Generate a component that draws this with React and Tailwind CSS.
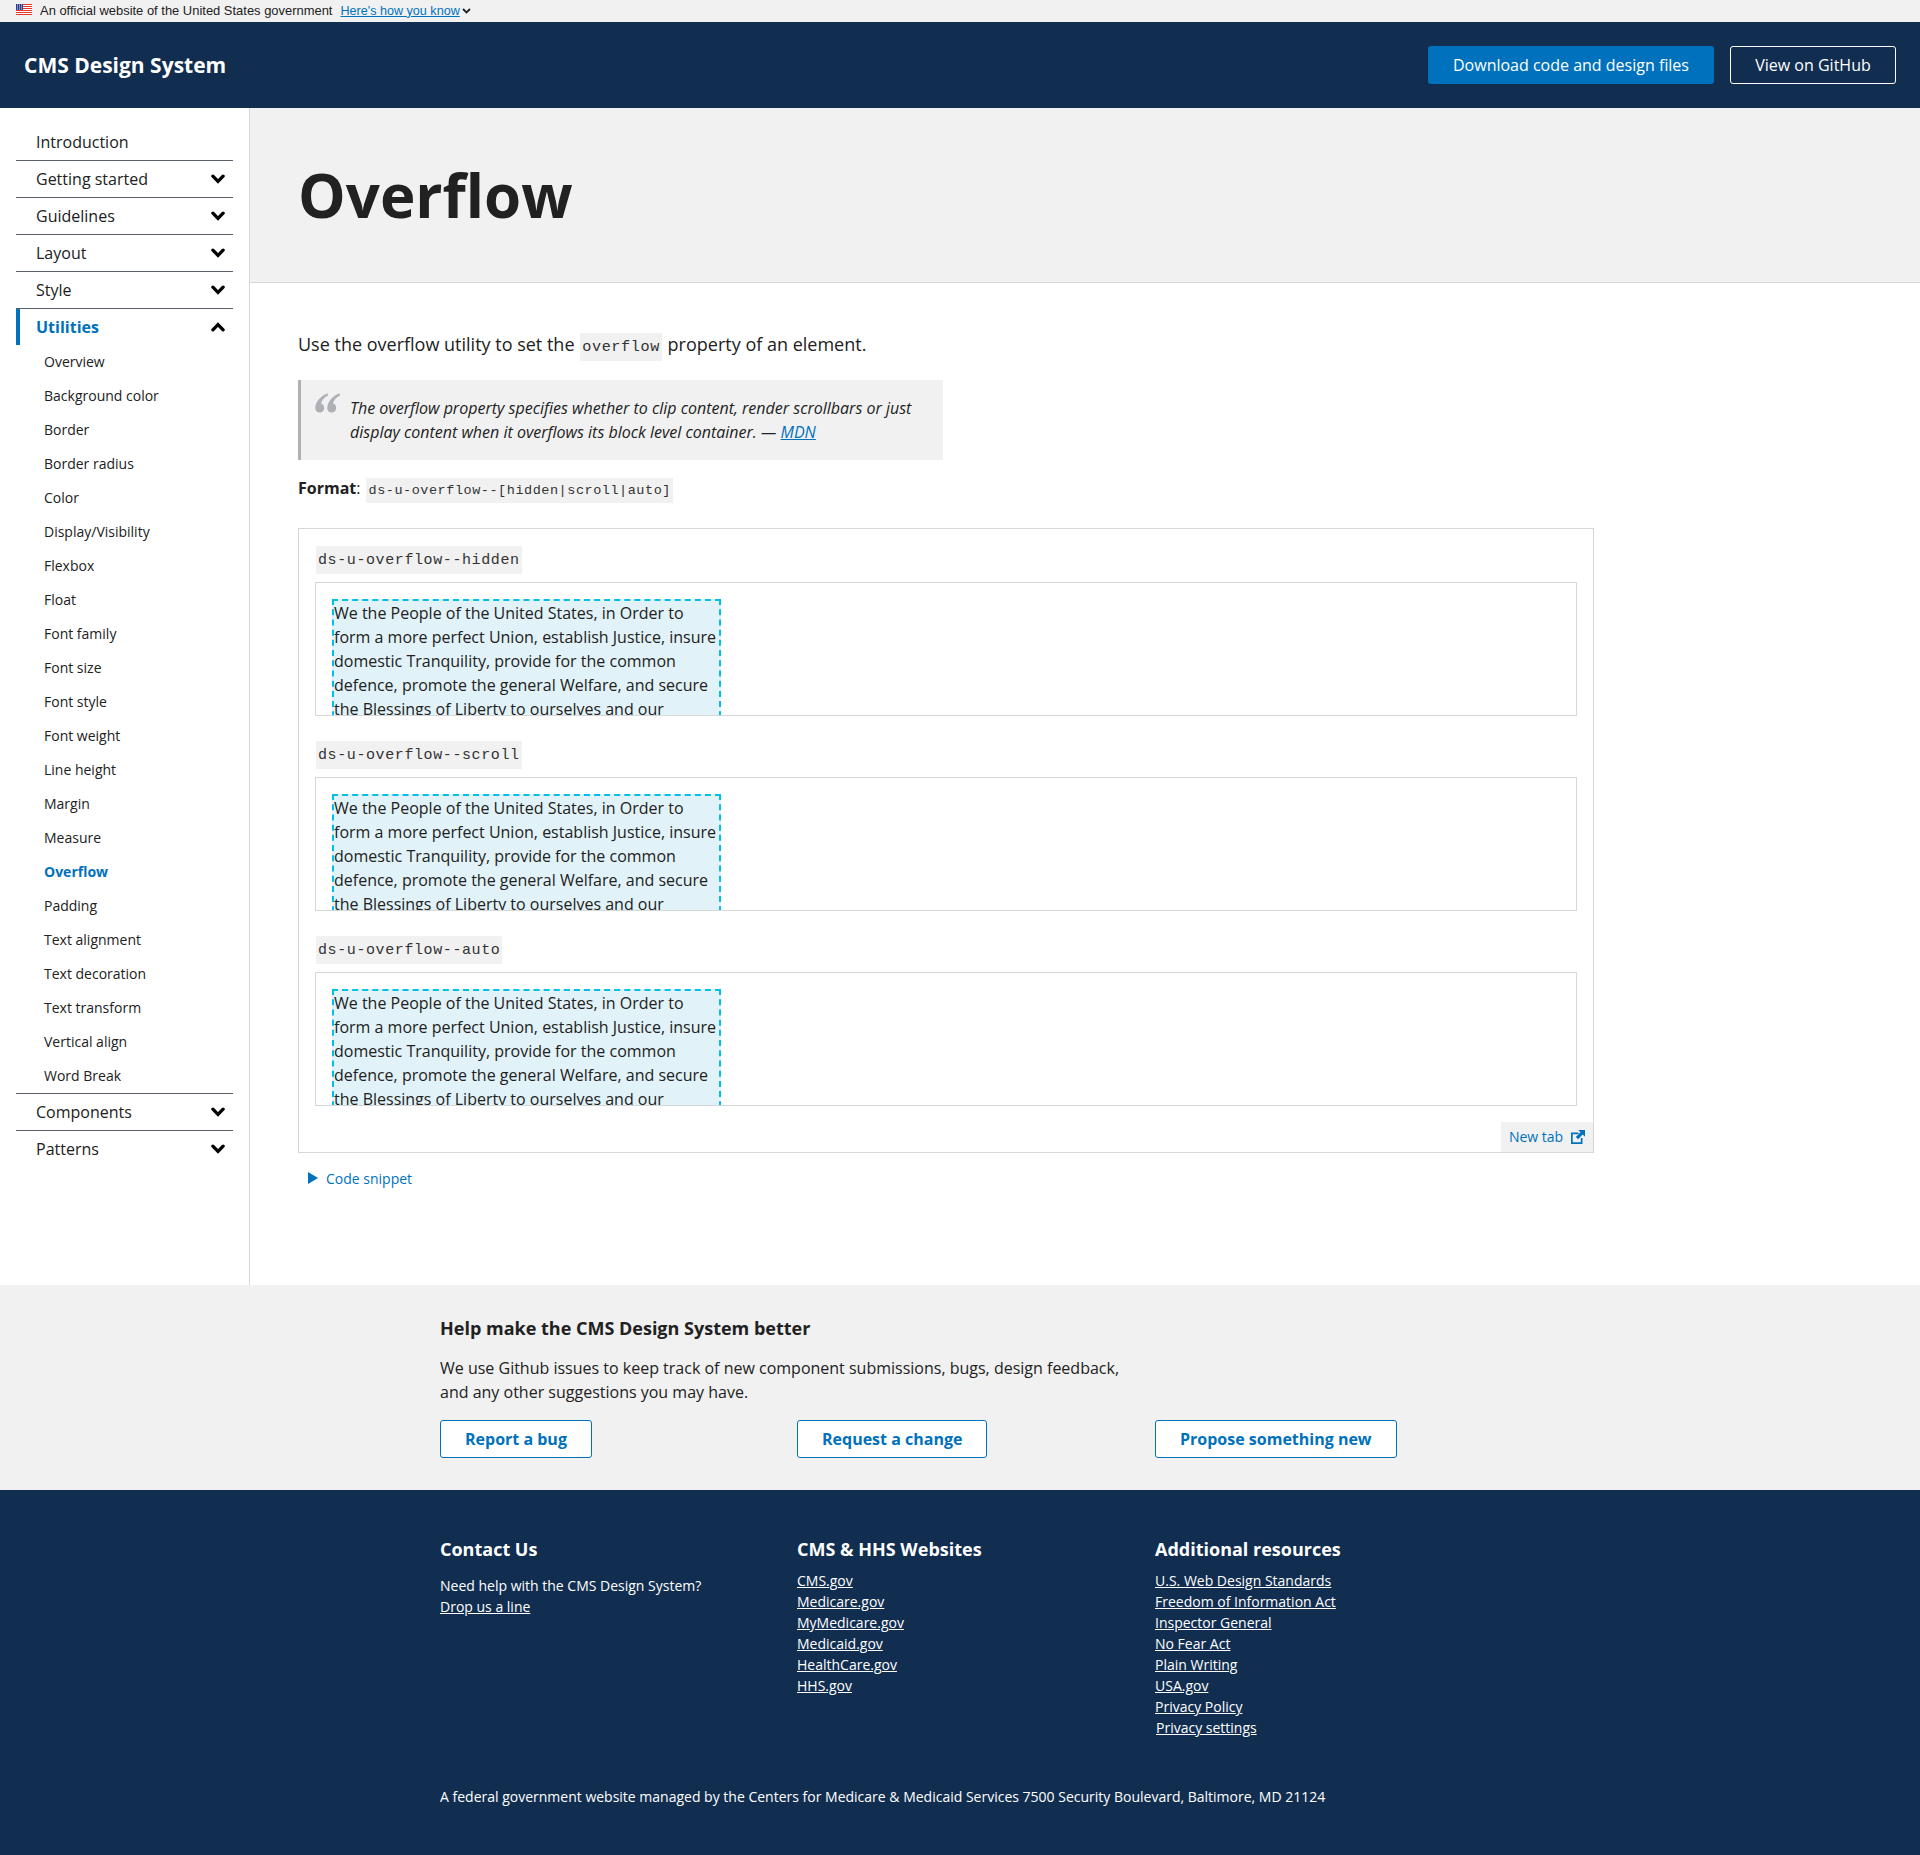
const OPEN = "font-['Open_Sans',sans-serif]";
const Chevron = ({ up }) => (
  <svg width="14" height="10" viewBox="0 0 14 10" className={up ? "rotate-180" : ""}>
    <path d="M1.9 2.2 L7 7.3 L12.1 2.2" fill="none" stroke="#000" strokeWidth="3.3" strokeLinecap="round" strokeLinejoin="miter" />
  </svg>
);
const Flag = () => (
  <svg width="16" height="11" viewBox="0 0 16 11" className="-mt-[3px]">
    <rect width="16" height="11" fill="#fff" />
    {[0, 2, 4, 6, 8, 10].map((y) => <rect key={y} y={y} width="16" height="1" fill="#e8362f" />)}
    <rect width="7" height="6" fill="#2e3a8c" />
    {[1, 3, 5].map((x) => [1, 3, 5].map((y) => <rect key={x + "-" + y} x={x} y={y - 0.5} width="1" height="1" fill="#dfe3f5" />))}
  </svg>
);
const ExternalIcon = () => (
  <svg width="14" height="14" viewBox="0 0 14 14" fill="#0071bc">
    <path d="M0 2.5h7.5v1.7H1.7v8.1h8.1V8h1.7v6H0z" />
    <path d="M7.2 0H14v6.8l-2.3-2.3-4.6 4.7-2.3-2.3 4.7-4.6z" />
  </svg>
);
const QuoteIcon = () => (
  <svg width="25" height="20" viewBox="0 0 25 20" fill="#aeb0b5">
    <path d="M12.5 0.3 C7 2.5 1.5 7 0.4 13.5 C-0.2 17.5 1.8 19.6 4.6 19.6 C7.4 19.6 9.2 17.5 9.2 15 C9.2 12.6 7.8 11 6 10.6 C6.8 7 9.5 4 13 2.5 Z" />
    <path d="M24.5 0.3 C19 2.5 13.5 7 12.4 13.5 C11.8 17.5 13.8 19.6 16.6 19.6 C19.4 19.6 21.2 17.5 21.2 15 C21.2 12.6 19.8 11 18 10.6 C18.8 7 21.5 4 25 2.5 Z" />
  </svg>
);

const top1 = ["Getting started", "Guidelines", "Layout", "Style"];
const subs = ["Overview", "Background color", "Border", "Border radius", "Color", "Display/Visibility", "Flexbox", "Float", "Font family", "Font size", "Font style", "Font weight", "Line height", "Margin", "Measure", "Overflow", "Padding", "Text alignment", "Text decoration", "Text transform", "Vertical align", "Word Break"];

const NavRow = ({ label, children, first }) => (
  <div className={"h-[37px] flex items-center justify-between pl-5 pr-[8px] text-[16px] text-[#212121] " + (first ? "" : "border-t border-[#5b616b]") }>
    <span>{label}</span>
    {children}
  </div>
);

const Demo = ({ name }) => (
  <div className="flex flex-col items-start">
    <code className="bg-[#f1f1f1] h-[28px] ml-[1px] px-[2px] pt-[2px] flex items-center font-['Liberation_Mono',monospace] text-[15px] tracking-[0.6px] text-[#333333]">{name}</code>
    <div className="mt-[8px] w-full h-[134px] border border-[#d6d7d9] px-4 pt-4 overflow-hidden">
      <div className="w-[389px] h-[200px] border-2 border-dashed border-[#02bfe7] bg-[#e1f3f8] text-[16px] leading-6 text-[#212121]">
        We the People of the United States, in Order to form a more perfect Union, establish Justice, insure domestic Tranquility, provide for the common defence, promote the general Welfare, and secure the Blessings of Liberty to ourselves and our Posterity, do ordain and establish this Constitution.
      </div>
    </div>
  </div>
);

const FootLink = ({ children }) => <a className="block underline text-white">{children}</a>;

export default function App() {
  return (
    <div className={OPEN + " w-[1920px] h-[1855px] bg-white text-[#212121] overflow-hidden"}>
      <div className="h-[22px] bg-[#f1f1f1] flex items-center pl-4 font-['Liberation_Sans',sans-serif] text-[12.95px] text-[#212121]">
        <Flag />
        <span className="ml-[8px]">An official website of the United States government</span>
        <a className="ml-[8px] text-[12.6px] text-[#0071bc] underline">Here's how you know</a>
        <svg width="9" height="6" viewBox="0 0 9 6" className="ml-[2px]"><path d="M1 1 L4.5 4.5 L8 1" fill="none" stroke="#212121" strokeWidth="1.8" /></svg>
      </div>
      <header className="h-[86px] bg-[#112e51] flex items-center justify-between pl-6 pr-6">
        <div className="text-white font-bold text-[21px] mt-[1px]">CMS Design System</div>
        <div className="flex gap-4">
          <div className="h-[38px] w-[286px] flex items-center justify-center bg-[#0071bc] rounded-[3px] text-white text-[16px]">Download code and design files</div>
          <div className="h-[38px] w-[166px] flex items-center justify-center border border-white rounded-[3px] text-white text-[16px]">View on GitHub</div>
        </div>
      </header>

      <div className="flex h-[1177px]">
        <aside className="w-[250px] shrink-0 border-r border-[#d6d7d9] pt-[15px] pl-4 pr-4">
          <NavRow label="Introduction" first />
          {top1.map((t) => <NavRow key={t} label={t}><Chevron /></NavRow>)}
          <div className="relative h-[37px] flex items-center justify-between pl-5 pr-[8px] text-[16px] font-bold text-[#0071bc] border-t border-[#5b616b]">
            <span className="absolute left-0 top-0 bottom-0 w-1 bg-[#0071bc]" />
            <span>Utilities</span>
            <Chevron up />
          </div>
          <ul className="text-[14px] pl-7 -mt-[1px]">
            {subs.map((s) => (
              <li key={s} className={"h-[34px] flex items-center " + (s === "Overflow" ? "font-bold text-[#0071bc]" : "")}>{s}</li>
            ))}
          </ul>
          <div className="mt-[1px]">
            <NavRow label="Components"><Chevron /></NavRow>
            <NavRow label="Patterns"><Chevron /></NavRow>
          </div>
        </aside>
        <main className="flex-1 min-w-0">
          <div className="h-[175px] bg-[#f1f1f1] border-b border-[#d6d7d9] pl-[48px] flex items-center">
            <h1 className="text-[60px] font-bold text-[#212121] leading-none">Overflow</h1>
          </div>
          <div className="pl-[48px] pt-[46px]">
            <p className="text-[18px] leading-[30px] h-[30px]">
              Use the overflow utility to set the <code className="bg-[#f1f1f1] px-[2px] py-[5px] font-['Liberation_Mono',monospace] text-[15.2px] tracking-[0.6px] text-[#333333] mx-[1px]">overflow</code> property of an element.
            </p>
            <div className="mt-[21px] w-[645px] h-[80px] bg-[#f1f1f1] border-l-[3px] border-[#aeb0b5] flex pl-[14px] pt-[16px]">
              <div className="w-[25px] h-5 shrink-0 -mt-[3px]"><QuoteIcon /></div>
              <p className="ml-[10px] italic text-[16px] leading-6 w-[590px]">
                The overflow property specifies whether to clip content, render scrollbars or just display content when it overflows its block level container. — <a className="text-[#0071bc] underline">MDN</a>
              </p>
            </div>
            <div className="mt-[16px] flex items-center h-[25px] text-[16px]">
              <div className="-mt-[2px]"><strong>Format</strong><span>:</span></div>
              <code className="ml-[6px] bg-[#f1f1f1] h-[25px] px-[2px] pt-[1px] flex items-center font-['Liberation_Mono',monospace] text-[13.5px] tracking-[0.54px] text-[#333333] mt-[4px]">ds-u-overflow--[hidden|scroll|auto]</code>
            </div>
            <div className="mt-[27px] w-[1296px] h-[625px] border border-[#d6d7d9] relative pl-4 pr-4 pt-[17px] flex flex-col gap-[25px]">
              <Demo name="ds-u-overflow--hidden" />
              <Demo name="ds-u-overflow--scroll" />
              <Demo name="ds-u-overflow--auto" />
              <div className="absolute right-0 bottom-0 w-[92px] h-[30px] bg-[#f1f1f1] flex items-center justify-center gap-2 text-[14px] text-[#0071bc]">
                <span className="-mt-[1px]">New tab</span>
                <ExternalIcon />
              </div>
            </div>
            <div className="mt-[13px] ml-[10px] flex items-center text-[14px] text-[#0071bc] h-[24px]">
              <svg width="10" height="12" viewBox="0 0 10 12"><path d="M0 0 L10 6 L0 12 Z" fill="#0071bc" /></svg>
              <span className="ml-[8px]">Code snippet</span>
            </div>
          </div>
        </main>
      </div>

      <section className="h-[205px] bg-[#f1f1f1] pl-[440px] pt-[29px]">
        <h2 className="text-[18px] font-bold leading-[28px]">Help make the CMS Design System better</h2>
        <p className="mt-[14px] text-[16px] leading-6 w-[700px]">We use Github issues to keep track of new component submissions, bugs, design feedback, and any other suggestions you may have.</p>
        <div className="mt-[16px] grid grid-cols-[357px_358px_357px] text-[16px] font-bold text-[#0071bc]">
          <div><span className="inline-flex items-center h-[38px] px-6 bg-white border border-[#0071bc] rounded-[3px]">Report a bug</span></div>
          <div><span className="inline-flex items-center h-[38px] px-6 bg-white border border-[#0071bc] rounded-[3px]">Request a change</span></div>
          <div><span className="inline-flex items-center h-[38px] px-6 bg-white border border-[#0071bc] rounded-[3px]">Propose something new</span></div>
        </div>
      </section>

      <footer className="h-[365px] bg-[#112e51] text-white pl-[440px] pt-[45px]">
        <div className="grid grid-cols-[357px_358px_357px] h-[222px]">
          <div>
            <h3 className="text-[18px] font-bold leading-[28px]">Contact Us</h3>
            <p className="mt-[12px] text-[14px] leading-[21px]">Need help with the CMS Design System?<br /><a className="underline">Drop us a line</a></p>
          </div>
          <div>
            <h3 className="text-[18px] font-bold leading-[28px]">CMS &amp; HHS Websites</h3>
            <div className="mt-[7px] text-[14px] leading-[21px]">
              {["CMS.gov", "Medicare.gov", "MyMedicare.gov", "Medicaid.gov", "HealthCare.gov", "HHS.gov"].map((l) => <FootLink key={l}>{l}</FootLink>)}
            </div>
          </div>
          <div>
            <h3 className="text-[18px] font-bold leading-[28px]">Additional resources</h3>
            <div className="mt-[7px] text-[14px] leading-[21px]">
              {["U.S. Web Design Standards", "Freedom of Information Act", "Inspector General", "No Fear Act", "Plain Writing", "USA.gov", "Privacy Policy"].map((l) => <FootLink key={l}>{l}</FootLink>)}
              <a className="block underline text-white ml-[1px]">Privacy settings</a>
            </div>
          </div>
        </div>
        <p className="mt-[29px] text-[14px] leading-[21px]">A federal government website managed by the Centers for Medicare &amp; Medicaid Services 7500 Security Boulevard, Baltimore, MD 21124</p>
      </footer>
    </div>
  );
}
